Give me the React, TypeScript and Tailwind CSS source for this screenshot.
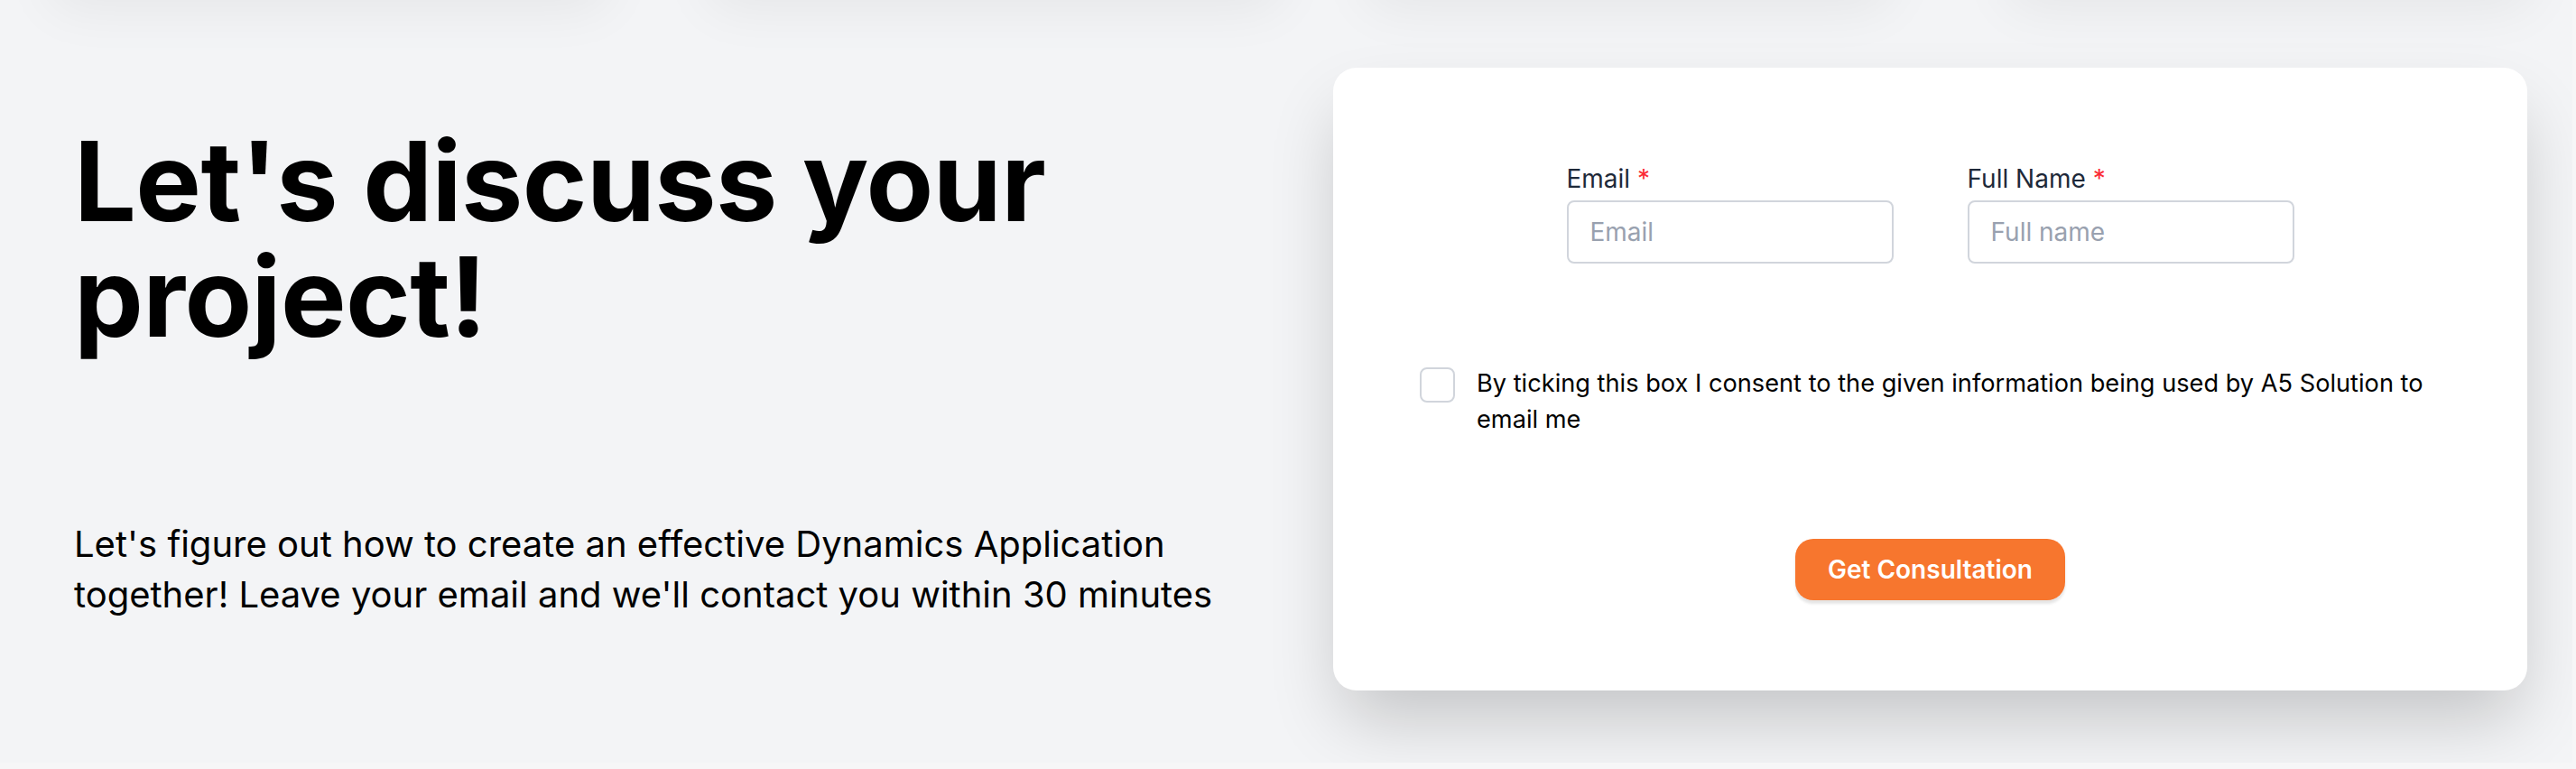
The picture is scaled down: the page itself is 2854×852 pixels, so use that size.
import React from 'react';

const shadowBlocks = [
  { w: 'w-[620px]', ml: 'ml-[55px]' },
  { w: 'w-[637px]', ml: 'ml-[109px]' },
  { w: 'w-[583px]', ml: 'ml-[92px]' },
  { w: 'w-[583px]', ml: 'ml-[127px]' },
];

const Field = ({ label, placeholder }: { label: string; placeholder: string }) => (
  <div className="flex flex-col w-[362px]">
    <label className="text-[28px] leading-[36px] text-gray-800">
      {label} <span className="text-red-500">*</span>
    </label>
    <input
      type="text"
      placeholder={placeholder}
      className="mt-[6px] h-[70px] w-full rounded-lg border-2 border-gray-300 bg-white px-[24px] text-[28px] text-gray-800 placeholder:text-gray-400 outline-none"
    />
  </div>
);

export default function App() {
  return (
    <div className="min-h-screen bg-[#f6f6f7] font-['Inter',sans-serif]">
      <section className="relative w-[2850px] h-[845px] overflow-hidden bg-[#f3f4f6]">
        {/* shadows of the cards from the section above */}
        <div className="flex h-0">
          {shadowBlocks.map((b, i) => (
            <div
              key={i}
              className={`${b.w} ${b.ml} h-[80px] -translate-y-[80px] rounded-3xl bg-[#f3f4f6] shadow-[0_10px_60px_rgba(0,0,0,0.06)]`}
            />
          ))}
        </div>

        <div className="flex pl-[82px] pt-[75px]">
          {/* Left column */}
          <div className="flex-1 pt-[62px]">
            <h1 className="text-[122px] leading-[128px] font-bold tracking-[-0.005em] text-black">
              Let's discuss your
              <br />
              project!
            </h1>
            <p className="mt-[182px] text-[40px] leading-[56px] text-black">
              Let's figure out how to create an effective Dynamics Application
              <br />
              together! Leave your email and we'll contact you within 30 minutes
            </p>
          </div>

          {/* Form card */}
          <div className="w-[1323px] h-[690px] mr-[50px] rounded-[26px] bg-white px-[96px] pt-[105px] shadow-[0_40px_80px_-10px_rgba(0,0,0,0.2)]">
            <div className="flex justify-center gap-[82px]">
              <Field label="Email" placeholder="Email" />
              <Field label="Full Name" placeholder="Full name" />
            </div>

            <label className="mt-[113px] flex items-start gap-[24px]">
              <span className="mt-[2px] h-[39px] w-[39px] shrink-0 rounded-lg border-2 border-gray-300 bg-white" />
              <span className="text-[27.2px] leading-[40px] text-black">
                By ticking this box I consent to the given information being used by A5 Solution to email me
              </span>
            </label>

            <div className="mt-[112px] flex justify-center">
              <button className="h-[68px] w-[299px] rounded-[20px] bg-[#f7762e] text-[28px] font-semibold text-white shadow-[0_4px_3px_rgba(0,0,0,0.1)]">
                Get Consultation
              </button>
            </div>
          </div>
        </div>
      </section>
    </div>
  );
}
